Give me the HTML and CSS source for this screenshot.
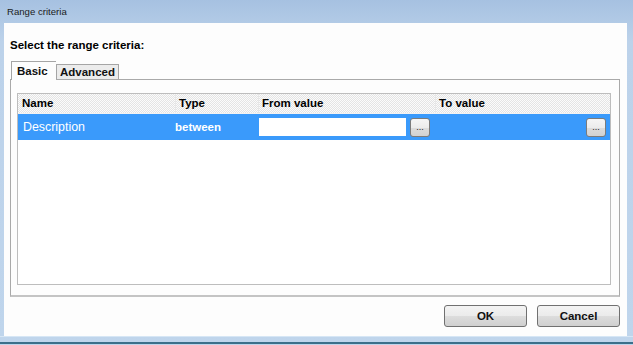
FILE: index.html
```html
<!DOCTYPE html>
<html lang="en">
<head>
<meta charset="UTF-8">
<title>Range criteria</title>
<link rel="stylesheet" href="styles.css">
</head>
<body>

<!-- Dialog window -->
<div class="window">
  <div class="titlebar">Range criteria</div>

  <div class="client">
    <div class="prompt">Select the range criteria:</div>

    <!-- Tabs -->
    <div class="tabs">
      <div class="tab active">Basic</div>
      <div class="tab">Advanced</div>
    </div>

    <div class="tab-panel">
      <div class="grid">
        <div class="grid-head">
          <div class="cell">Name</div>
          <div class="cell">Type</div>
          <div class="cell">From value</div>
          <div class="cell">To value</div>
        </div>
        <div class="grid-row selected">
          <div class="cell name">Description</div>
          <div class="cell type">between</div>
          <div class="cell value">
            <input class="value-input" type="text">
            <button class="dots">...</button>
          </div>
          <div class="cell value to">
            <button class="dots">...</button>
          </div>
        </div>
      </div>
    </div>

    <div class="actions">
      <button class="btn">OK</button>
      <button class="btn">Cancel</button>
    </div>
  </div>

  <div class="frame-bottom"></div>
</div>

</body>
</html>
```

FILE: styles.css
```css
html, body {
  margin: 0;
  padding: 0;
  background: #bcd3eb;
}

/* Window frame */
.window {
  width: 633px;
  height: 345px;
  box-sizing: border-box;
  display: flex;
  flex-direction: column;
  background: linear-gradient(180deg, #a6c1e1 0%, #bcd2ea 12%, #bfd5ec 100%);
  font-family: "Liberation Sans", Arial, sans-serif;
  color: #000;
  overflow: hidden;
}

.titlebar {
  height: 23px;
  line-height: 24px;
  padding-left: 7px;
  font-size: 9.6px;
  color: #1b1b1b;
  flex: none;
}

.client {
  flex: none;
  height: 313px;
  margin: 0 6px 0 4px;
  background: #fdfdfd;
  box-sizing: border-box;
  padding: 0 7px 0 6px;
  display: flex;
  flex-direction: column;
}

.frame-bottom {
  flex: 1;
  border-top: 1px solid #d6e6f5;
  border-bottom: 2px solid #3b6f8a;
  margin-bottom: 1px;
}

.prompt {
  font-weight: bold;
  font-size: 11.5px;
  height: 15px;
  margin-top: 15px;
  line-height: 15px;
}

/* Tabs */
.tabs {
  display: flex;
  align-items: flex-end;
  margin-top: 8px;
  padding-left: 1px;
  height: 18px;
  position: relative;
  z-index: 1;
}

.tab {
  box-sizing: border-box;
  height: 15px;
  padding: 0 3px;
  border: 1px solid #a5a5a5;
  border-bottom: none;
  background: #ececec;
  font-weight: bold;
  font-size: 11.5px;
  line-height: 15px;
  color: #111;
}

.tab.active {
  height: 19px;
  margin-bottom: -1px;
  width: 45px;
  padding: 0 5px;
  line-height: 19px;
  background: #fdfdfd;
  border-right: none;
}

.tab-panel {
  box-sizing: border-box;
  height: 218px;
  border: 1px solid #a9a9a9;
  border-bottom: 2px solid #c4c4c4;
  padding: 13px 8px 10px 6px;
  display: flex;
}

/* Grid */
.grid {
  flex: 1;
  border: 1px solid #bdbdbd;
  background: #fff;
  font-size: 11.5px;
}

.grid-head,
.grid-row {
  display: grid;
  grid-template-columns: 157px 83px 177px 1fr;
}

.grid-head {
  height: 19px;
  background: repeating-conic-gradient(#e4e4e4 0 25%, #fbfbfb 0 50%) 0 0 / 2px 2px;
  font-weight: bold;
  border-bottom: 1px solid #f2f2f2;
}

.grid-head .cell {
  line-height: 19px;
  padding-left: 3px;
  border-left: 1px solid #e8e8e8;
}

.grid-head .cell:first-child {
  border-left: none;
  padding-left: 4px;
}

.grid-row {
  height: 26px;
}

.grid-row.selected {
  background: #3a9afb;
  color: #fff;
}

.grid-row .cell {
  display: flex;
  align-items: center;
}

.grid-row .name {
  padding-left: 5px;
  font-size: 12.4px;
}

.grid-row .type {
  font-weight: bold;
}

.grid-row .value {
  padding-left: 1px;
  gap: 4px;
}

.grid-row .value.to {
  justify-content: flex-end;
  padding-right: 4px;
}

.value-input {
  box-sizing: border-box;
  width: 147px;
  height: 18px;
  margin: 0;
  border: none;
  background: #fff;
  padding: 0;
}

.dots {
  box-sizing: border-box;
  width: 20px;
  height: 19px;
  margin: 0;
  padding: 0 0 4px;
  border: 1px solid #7b7b7b;
  border-radius: 3px;
  background: linear-gradient(180deg, #f5f5f5 0%, #ececec 50%, #dcdcdc 51%, #d2d2d2 100%);
  font-family: "Liberation Sans", Arial, sans-serif;
  font-size: 9px;
  color: #222;
  line-height: 1;
  display: flex;
  align-items: flex-end;
  justify-content: center;
}

/* Bottom buttons */
.actions {
  display: flex;
  justify-content: flex-end;
  gap: 10px;
  margin-top: 8px;
  padding-right: 0;
}

.btn {
  box-sizing: border-box;
  width: 83px;
  height: 22px;
  margin: 0;
  border: 1px solid #707070;
  border-radius: 3px;
  background: linear-gradient(180deg, #f3f3f3 0%, #ebebeb 50%, #dddddd 51%, #cfcfcf 100%);
  font-family: "Liberation Sans", Arial, sans-serif;
  font-weight: bold;
  font-size: 11.5px;
  color: #111;
}
```
